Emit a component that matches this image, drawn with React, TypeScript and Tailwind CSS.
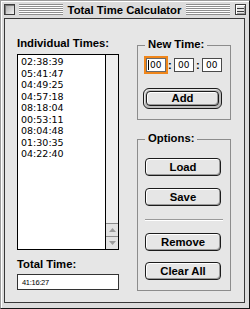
const times = [
  "02:38:39",
  "05:41:47",
  "04:49:25",
  "04:57:18",
  "08:18:04",
  "00:53:11",
  "08:04:48",
  "01:30:35",
  "04:22:40",
]

function Stripes() {
  return (
    <div className="flex-1 h-[11px] bg-[repeating-linear-gradient(to_bottom,#8e8e8e_0px,#8e8e8e_1px,#ffffff_1px,#ffffff_2px)]" />
  )
}

function MacButton({ label }: { label: string }) {
  return (
    <button className="block mx-[7px] w-[76px] h-[18px] rounded-[4px] border border-[#1c1c1c] bg-[#e6e6e6] shadow-[inset_1px_1px_0_#ffffff,inset_-1px_-1px_0_#9a9a9a] font-['Liberation_Sans',Arial,sans-serif] font-bold text-[11.3px] leading-[16px] text-black">
      {label}
    </button>
  )
}

function TimeField({ focused }: { focused?: boolean }) {
  return (
    <div
      className={
        focused
          ? "w-[20px] h-[14px] border border-[#6a6a6a] bg-white ring-2 ring-[#f0861a] pl-[1px] flex items-center font-['DejaVu_Sans',sans-serif] text-[9px] leading-[12px] text-black"
          : "w-[20px] h-[14px] border border-[#4a4a4a] bg-white pl-[3px] flex items-center font-['DejaVu_Sans',sans-serif] text-[9px] leading-[12px] text-black"
      }
    >
      {focused && <span className="inline-block w-[1px] h-[10px] bg-black mr-[1px]" />}
      00
    </div>
  )
}

function Colon() {
  return (
    <span className="w-[8px] text-center font-['Liberation_Sans',Arial,sans-serif] font-bold text-[11.3px] leading-[14px] text-black">
      :
    </span>
  )
}

export default function App() {
  return (
    <div className="w-[250px] h-[309px] flex flex-col bg-[#dcdcdc] border border-t-[#9c9c9c] border-l-[#9c9c9c] border-r-[#141414] border-b-[#141414] shadow-[inset_1px_1px_0_#ffffff]">
      {/* title bar */}
      <div className="h-[17px] flex items-center pl-[3px] pr-[3px]">
        <div className="w-[11px] h-[11px] border border-[#3c3c3c] bg-[linear-gradient(135deg,#a8a8a8,#f4f4f4)] shadow-[inset_1px_1px_0_#7a7a7a]" />
        <div className="w-[4px]" />
        <Stripes />
        <span className="px-[5px] font-['Liberation_Sans',Arial,sans-serif] font-bold text-[11.3px] leading-[14px] text-black whitespace-nowrap">
          Total Time Calculator
        </span>
        <Stripes />
        <div className="w-[5px]" />
        <div className="w-[11px] h-[11px] border border-[#3c3c3c] bg-[#e4e4e4] shadow-[inset_1px_1px_0_#ffffff,inset_-1px_-1px_0_#9a9a9a] flex flex-col justify-center px-[1px]">
          <div className="h-[1px] bg-[#3c3c3c]" />
          <div className="h-[2px]" />
          <div className="h-[1px] bg-[#3c3c3c]" />
        </div>
      </div>

      {/* content */}
      <div className="flex-1 ml-[3px] mr-[4px] mb-[5px] border border-[#383838] bg-[#e6e6e6] flex pl-[12px]">
        {/* left column */}
        <div className="w-[102px] pt-[17px] flex flex-col">
          <div className="h-[14px] font-['Liberation_Sans',Arial,sans-serif] font-bold text-[11.3px] leading-[14px] text-black whitespace-nowrap">
            Individual Times:
          </div>
          <div className="mt-[4px] h-[196px] border border-black flex">
            <div className="flex-1 bg-white pt-[1px] pl-[3px] font-['DejaVu_Sans',sans-serif] text-[9.5px] leading-[11.5px] text-black">
              {times.map((t) => (
                <div key={t}>{t}</div>
              ))}
            </div>
            <div className="w-[13px] border-l border-black bg-[#eeeeee] flex flex-col justify-end">
              <div className="h-[13px] border-t border-[#8a8a8a] bg-[#e2e2e2] flex items-center justify-center">
                <svg width="7" height="4" viewBox="0 0 7 4">
                  <polygon points="3.5,0 7,4 0,4" fill="#9a9a9a" />
                </svg>
              </div>
              <div className="h-[13px] border-t border-[#8a8a8a] bg-[#e2e2e2] flex items-center justify-center">
                <svg width="7" height="4" viewBox="0 0 7 4">
                  <polygon points="0,0 7,0 3.5,4" fill="#9a9a9a" />
                </svg>
              </div>
            </div>
          </div>
          <div className="mt-[7px] h-[14px] font-['Liberation_Sans',Arial,sans-serif] font-bold text-[11.3px] leading-[14px] text-black whitespace-nowrap">
            Total Time:
          </div>
          <div className="mt-[3px] h-[16px] border border-[#333333] bg-white pt-[2px] pl-[4px] font-['Liberation_Sans',Arial,sans-serif] text-[7.5px] leading-[12px] tracking-[-0.3px] text-black">
            41:16:27
          </div>
        </div>

        {/* right column */}
        <div className="ml-[18px] w-[94px] pt-[18px] flex flex-col">
          <fieldset className="h-[83px] border border-[#8c8c8c]">
            <legend className="ml-[7px] px-[3px] pb-[2px] font-['Liberation_Sans',Arial,sans-serif] font-bold text-[11.3px] leading-[14px] text-black">
              New Time:
            </legend>
            <div className="mt-[5px] ml-[8px] flex items-center">
              <TimeField focused />
              <Colon />
              <TimeField />
              <Colon />
              <TimeField />
            </div>
            <div className="ml-[5px] mt-[16px] w-[79px] h-[21px] rounded-[6px] border border-[#1c1c1c] bg-[#bdbdbd] p-[2px] shadow-[inset_1px_1px_0_#e8e8e8]">
              <button className="block w-full h-full rounded-[4px] border border-[#1c1c1c] bg-[#e6e6e6] shadow-[inset_1px_1px_0_#ffffff,inset_-1px_-1px_0_#9a9a9a] font-['Liberation_Sans',Arial,sans-serif] font-bold text-[11.3px] leading-[13px] text-black">
                Add
              </button>
            </div>
          </fieldset>

          <fieldset className="mt-[11px] h-[160px] border border-[#8c8c8c]">
            <legend className="ml-[7px] px-[3px] pb-[2px] font-['Liberation_Sans',Arial,sans-serif] font-bold text-[11.3px] leading-[14px] text-black">
              Options:
            </legend>
            <div className="pt-[11px] flex flex-col">
              <MacButton label="Load" />
              <div className="h-[12px]" />
              <MacButton label="Save" />
              <div className="mt-[13px] mx-[7px] h-[1px] bg-[#9a9a9a] shadow-[0_1px_0_#ffffff]" />
              <div className="h-[13px]" />
              <MacButton label="Remove" />
              <div className="h-[11px]" />
              <MacButton label="Clear All" />
            </div>
          </fieldset>
        </div>
      </div>
    </div>
  )
}
